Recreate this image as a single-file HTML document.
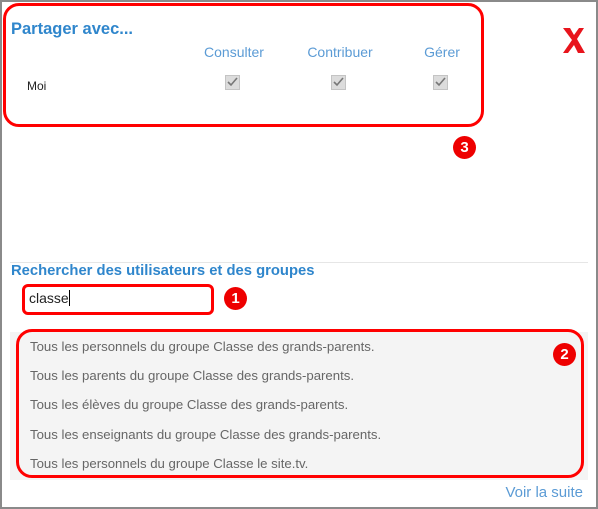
<!DOCTYPE html>
<html><head><meta charset="utf-8"><style>
*{margin:0;padding:0;box-sizing:border-box}
body{width:598px;height:509px;background:#fff;position:relative;overflow:hidden;font-family:"Liberation Sans",Arial,sans-serif}
.frame{position:absolute;left:0;top:0;width:598px;height:509px;border:2px solid #8a8a8a}
.a{position:absolute;white-space:nowrap}
.h{color:#2f86cc;font-weight:bold;font-size:15px}
.col{color:#5b9bd5;font-size:14px;transform:translateX(-50%)}
.cb{position:absolute;width:15px;height:15px;background:#dcdcdc;border:1px solid #c4c4c4}
.red{position:absolute;border:3.5px solid #f00;border-radius:14px}
.num{position:absolute;width:23px;height:23px;border-radius:50%;background:#e00;color:#fff;font-weight:bold;font-size:15px;text-align:center;line-height:23px}
.it{position:absolute;left:30px;color:#666;font-size:13.2px}
</style></head><body>
<div class="frame"></div>
<div class="red" style="left:3px;top:3px;width:481px;height:124px;border-radius:16px"></div>
<div class="a h" style="left:11px;top:20px;font-size:16.5px">Partager avec...</div>
<div class="a col" style="left:234px;top:44px">Consulter</div>
<div class="a col" style="left:340px;top:44px">Contribuer</div>
<div class="a col" style="left:442px;top:44px">Gérer</div>
<div class="a" style="left:27px;top:79px;font-size:12px;color:#222">Moi</div>
<div class="cb" style="left:225px;top:75px"></div>
<div class="cb" style="left:331px;top:75px"></div>
<div class="cb" style="left:433px;top:75px"></div>
<svg style="position:absolute;left:0;top:0" width="598" height="509">
<g stroke="#777" stroke-width="1.6" fill="none"><path d="M228 82l3 3 6-7"/><path d="M334 82l3 3 6-7"/><path d="M436 82l3 3 6-7"/></g>
<path d="M563 28l7 0 4 7 5-7 5 0-7 11 8 14-7 0-4-8-6 8-5 0 9-13z" fill="#e8141c"/>
</svg>
<div class="num" style="left:453px;top:136px">3</div>
<div class="a" style="left:10px;top:262px;width:578px;border-top:1px solid #e6e6e6"></div>
<div class="a h" style="left:11px;top:263px;font-size:14.8px">Rechercher des utilisateurs et des groupes</div>
<div class="red" style="left:22px;top:284px;width:192px;height:31px;border-radius:6px"></div>
<div class="a" style="left:29px;top:290px;font-size:14px;color:#222">classe<span style="border-left:1px solid #000"></span></div>
<div class="num" style="left:224px;top:287px">1</div>
<div class="a" style="left:10px;top:332px;width:578px;height:148px;background:#f4f4f4"></div>
<div class="red" style="left:16px;top:329px;width:568px;height:149px;border-radius:16px"></div>
<div class="it" style="top:339px">Tous les personnels du groupe Classe des grands-parents.</div>
<div class="it" style="top:368px">Tous les parents du groupe Classe des grands-parents.</div>
<div class="it" style="top:397px">Tous les élèves du groupe Classe des grands-parents.</div>
<div class="it" style="top:427px">Tous les enseignants du groupe Classe des grands-parents.</div>
<div class="it" style="top:456px">Tous les personnels du groupe Classe le site.tv.</div>
<div class="num" style="left:553px;top:343px">2</div>
<div class="a" style="right:15px;top:484px;font-size:15px;color:#5b9bd5">Voir la suite</div>
</body></html>
